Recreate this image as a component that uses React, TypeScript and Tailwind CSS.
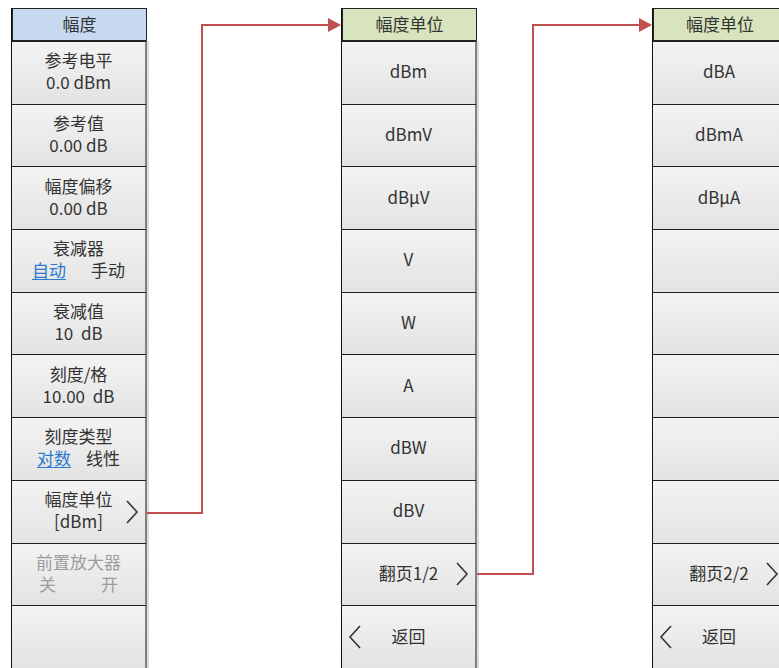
import React from "react";

const FONT = { fontFamily: '"Noto Sans CJK SC", "Noto Sans", sans-serif' };

function ChevronRight() {
  return (
    <svg width="14" height="26" viewBox="0 0 14 26" className="absolute right-[6px] top-1/2 -translate-y-1/2">
      <polyline points="2,2 12,13 2,24" fill="none" stroke="#333" strokeWidth="1.6" />
    </svg>
  );
}

function ChevronLeft() {
  return (
    <svg width="14" height="26" viewBox="0 0 14 26" className="absolute left-[6px] top-1/2 -translate-y-1/2">
      <polyline points="12,2 2,13 12,24" fill="none" stroke="#333" strokeWidth="1.6" />
    </svg>
  );
}

function Btn({ children, right, left }: { children?: React.ReactNode; right?: boolean; left?: boolean }) {
  return (
    <div className="relative h-[62.7px] shrink-0 border-t border-[#1e1e1e] border-r-2 border-r-[#808080] bg-gradient-to-b from-[#f3f3f3] to-[#e3e3e3] shadow-[2px_0_0_#dcdcdc] flex flex-col items-center justify-center pb-[3px] text-[17px] leading-[22px] text-[#333]">
      {children}
      {right && <ChevronRight />}
      {left && <ChevronLeft />}
    </div>
  );
}

function Header({ text, color }: { text: string; color: string }) {
  return (
    <div className={`h-[33px] shrink-0 border border-[#222] ${color} flex items-center justify-center pb-[2px] text-[17px] text-[#333]`}>
      {text}
    </div>
  );
}

function Column({ header, color, children, className }: { header: string; color: string; children: React.ReactNode; className: string }) {
  return (
    <div className={`absolute top-[8px] flex flex-col border-l border-[#111] ${className}`}>
      <Header text={header} color={color} />
      {children}
    </div>
  );
}

export default function App() {
  return (
    <div className="relative w-[779px] h-[668px] overflow-hidden bg-white" style={FONT}>
      <Column header="幅度" color="bg-[#c6d9f1]" className="left-[11px] w-[136px]">
        <Btn>
          <span>参考电平</span>
          <span>0.0 dBm</span>
        </Btn>
        <Btn>
          <span>参考值</span>
          <span>0.00 dB</span>
        </Btn>
        <Btn>
          <span>幅度偏移</span>
          <span>0.00 dB</span>
        </Btn>
        <Btn>
          <span>衰减器</span>
          <span className="flex gap-[25px]">
            <span className="text-[#2a7bd0] underline underline-offset-2">自动</span>
            <span>手动</span>
          </span>
        </Btn>
        <Btn>
          <span>衰减值</span>
          <span>10&nbsp;&nbsp;dB</span>
        </Btn>
        <Btn>
          <span>刻度/格</span>
          <span>10.00&nbsp;&nbsp;dB</span>
        </Btn>
        <Btn>
          <span>刻度类型</span>
          <span className="flex gap-[15px]">
            <span className="text-[#2a7bd0] underline underline-offset-2">对数</span>
            <span>线性</span>
          </span>
        </Btn>
        <Btn right>
          <span>幅度单位</span>
          <span>[dBm]</span>
        </Btn>
        <Btn>
          <span className="text-[#9c9c9c]">前置放大器</span>
          <span className="flex gap-[45px] text-[#9c9c9c]">
            <span>关</span>
            <span>开</span>
          </span>
        </Btn>
        <Btn />
      </Column>

      <Column header="幅度单位" color="bg-[#d7e4bd]" className="left-[341px] w-[136px]">
        <Btn>dBm</Btn>
        <Btn>dBmV</Btn>
        <Btn>dBμV</Btn>
        <Btn>V</Btn>
        <Btn>W</Btn>
        <Btn>A</Btn>
        <Btn>dBW</Btn>
        <Btn>dBV</Btn>
        <Btn right>翻页1/2</Btn>
        <Btn left>返回</Btn>
      </Column>

      <Column header="幅度单位" color="bg-[#d7e4bd]" className="left-[652px] w-[135px]">
        <Btn>dBA</Btn>
        <Btn>dBmA</Btn>
        <Btn>dBμA</Btn>
        <Btn />
        <Btn />
        <Btn />
        <Btn />
        <Btn />
        <Btn right>翻页2/2</Btn>
        <Btn left>返回</Btn>
      </Column>

      <svg className="absolute inset-0 pointer-events-none" width="779" height="668">
        <polyline points="147,513 202,513 202,25 330,25" fill="none" stroke="#c0504d" strokeWidth="2" />
        <polygon points="328,18 341,25 328,32" fill="#c0504d" />
        <polyline points="477,574 533,574 533,25 641,25" fill="none" stroke="#c0504d" strokeWidth="2" />
        <polygon points="639,18 652,25 639,32" fill="#c0504d" />
      </svg>
    </div>
  );
}
